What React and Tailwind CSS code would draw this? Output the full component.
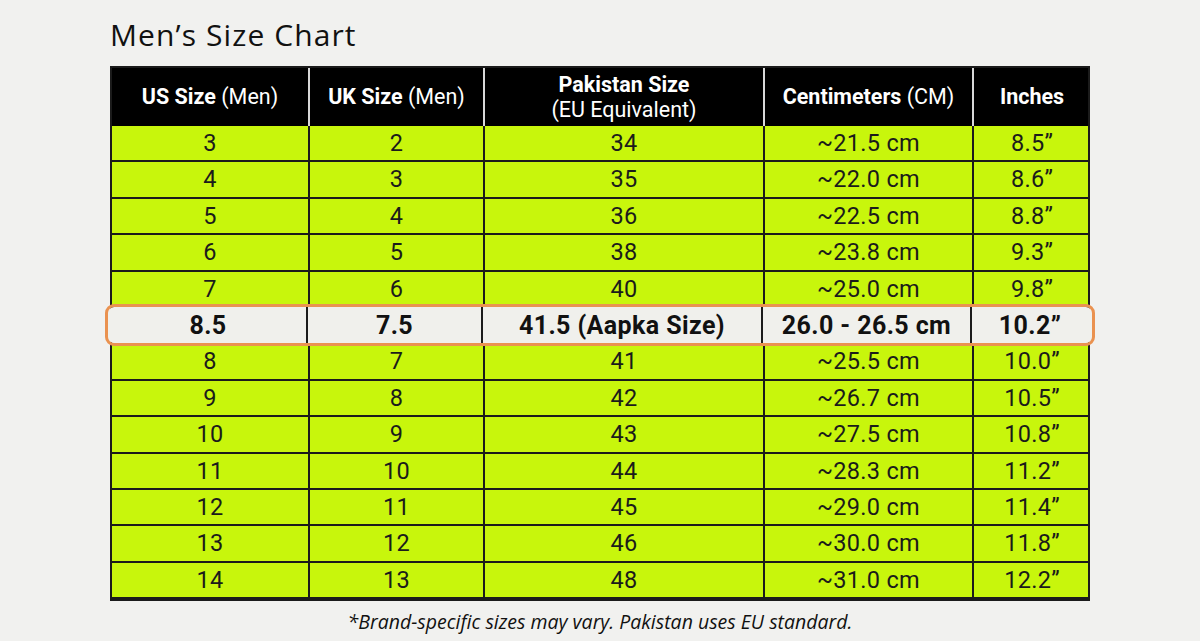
const cols = "grid grid-cols-[198px_175px_280px_209px_116px]"

const rowsTop = [
  ["3", "2", "34", "~21.5 cm", "8.5”"],
  ["4", "3", "35", "~22.0 cm", "8.6”"],
  ["5", "4", "36", "~22.5 cm", "8.8”"],
  ["6", "5", "38", "~23.8 cm", "9.3”"],
  ["7", "6", "40", "~25.0 cm", "9.8”"],
]

const rowsBottom = [
  ["8", "7", "41", "~25.5 cm", "10.0”"],
  ["9", "8", "42", "~26.7 cm", "10.5”"],
  ["10", "9", "43", "~27.5 cm", "10.8”"],
  ["11", "10", "44", "~28.3 cm", "11.2”"],
  ["12", "11", "45", "~29.0 cm", "11.4”"],
  ["13", "12", "46", "~30.0 cm", "11.8”"],
  ["14", "13", "48", "~31.0 cm", "12.2”"],
]

const Row = ({ cells }) => (
  <div className={`${cols} h-[36.4px] bg-[#c8f60c] border-b-2 border-[#1b1b1b]`}>
    {cells.map((c, i) => (
      <div
        key={i}
        className={`flex items-center justify-center text-[23.5px] tracking-[0.3px] text-[#1b1b1b] ${i < 4 ? "border-r-2 border-[#1b1b1b]" : ""}`}
      >
        {c}
      </div>
    ))}
  </div>
)

const App = () => {
  return (
    <div className="w-[1200px] h-[641px] bg-[#f1f1ef] font-['Roboto',sans-serif] flex flex-col pl-[110px] pt-[15px] overflow-hidden">
      <h1 className="text-[30px] leading-[40px] tracking-[1.1px] text-[#111] font-['Open_Sans',sans-serif] mb-[11px]">Men’s Size Chart</h1>

      <div className="w-[980px] border-2 border-[#1b1b1b]">
        <div className={`${cols} h-[58px] bg-black text-white text-[21.5px]`}>
          <div className="flex items-center justify-center border-r-2 border-[#d8d8d8]">
            <span className="font-bold">US Size</span>&nbsp;(Men)
          </div>
          <div className="flex items-center justify-center border-r-2 border-[#d8d8d8]">
            <span className="font-bold">UK Size</span>&nbsp;(Men)
          </div>
          <div className="flex flex-col items-center justify-center leading-[25px] border-r-2 border-[#d8d8d8]">
            <span className="font-bold">Pakistan Size</span>
            <span>(EU Equivalent)</span>
          </div>
          <div className="flex items-center justify-center border-r-2 border-[#d8d8d8]">
            <span className="font-bold">Centimeters</span>&nbsp;(CM)
          </div>
          <div className="flex items-center justify-center">
            <span className="font-bold">Inches</span>
          </div>
        </div>

        {rowsTop.map((r, i) => <Row key={i} cells={r} />)}

        <div className={`${cols} h-[36.4px] -mx-[4px] -my-[1px] px-[2px] relative bg-[#f0f0ec] outline-[3px] outline-[#ea9250] rounded-[6px] mb-[1px]`}>
          {["8.5", "7.5", "41.5 (Aapka Size)", "26.0 - 26.5 cm", "10.2”"].map((c, i) => (
            <div
              key={i}
              className={`flex items-center justify-center text-[25px] tracking-[0.4px] font-bold text-[#111] ${i < 4 ? "border-r-2 border-[#1b1b1b]" : ""}`}
            >
              {c}
            </div>
          ))}
        </div>

        {rowsBottom.map((r, i) => <Row key={i} cells={r} />)}
      </div>

      <p className="w-[980px] text-center mt-[6px] text-[19.5px] italic text-[#111] font-['Open_Sans',sans-serif]">
        *Brand-specific sizes may vary. Pakistan uses EU standard.
      </p>
    </div>
  )
}

export default App
